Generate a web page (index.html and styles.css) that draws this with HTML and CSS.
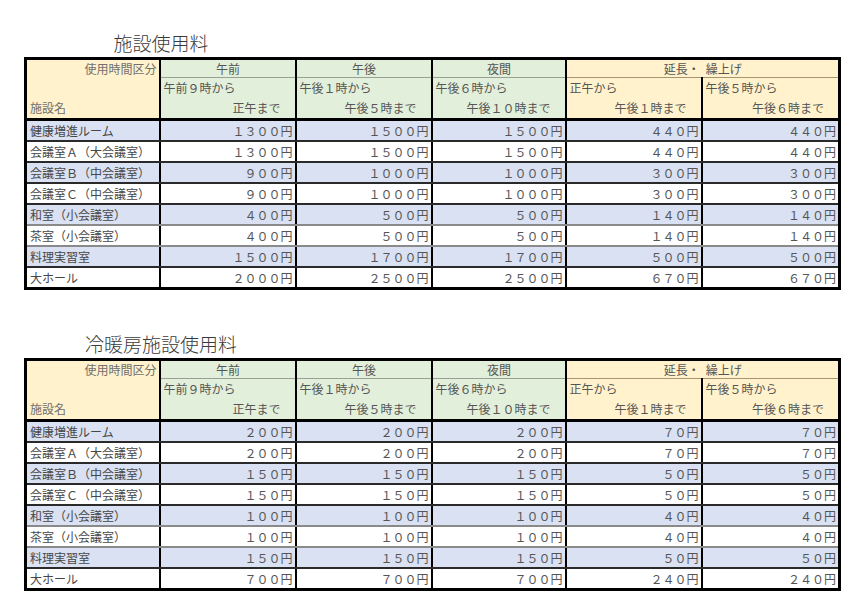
FILE: index.html
```html
<!DOCTYPE html>
<html lang="ja">
<head>
<meta charset="utf-8">
<title>施設使用料</title>
<link rel="stylesheet" href="styles.css">
</head>
<body>
<div class="page">
  <h2 class="title">施設使用料</h2>
  <table class="fee">
    <colgroup><col class="c1"><col class="c2"><col class="c3"><col class="c4"><col class="c5"><col class="c6"></colgroup>
    <tr class="h1">
      <td class="corner r">使用時間区分</td>
      <td class="g ctr">午前</td><td class="g ctr">午後</td><td class="g ctr">夜間</td>
      <td class="y ctr" colspan="2">延長・&ensp;繰上げ</td>
    </tr>
    <tr class="h2">
      <td class="corner"></td>
      <td class="g">午前９時から</td><td class="g">午後１時から</td><td class="g">午後６時から</td>
      <td class="y">正午から</td><td class="y">午後５時から</td>
    </tr>
    <tr class="h3">
      <td class="corner">施設名</td>
      <td class="g r">正午まで</td><td class="g r">午後５時まで</td><td class="g r">午後１０時まで</td>
      <td class="y r">午後１時まで</td><td class="y r">午後６時まで</td>
    </tr>
    <tr class="row b"><td>健康増進ルーム</td><td>１３００円</td><td>１５００円</td><td>１５００円</td><td>４４０円</td><td>４４０円</td></tr>
    <tr class="row"><td>会議室Ａ（大会議室）</td><td>１３００円</td><td>１５００円</td><td>１５００円</td><td>４４０円</td><td>４４０円</td></tr>
    <tr class="row b"><td>会議室Ｂ（中会議室）</td><td>９００円</td><td>１０００円</td><td>１０００円</td><td>３００円</td><td>３００円</td></tr>
    <tr class="row"><td>会議室Ｃ（中会議室）</td><td>９００円</td><td>１０００円</td><td>１０００円</td><td>３００円</td><td>３００円</td></tr>
    <tr class="row b soft"><td>和室（小会議室）</td><td>４００円</td><td>５００円</td><td>５００円</td><td>１４０円</td><td>１４０円</td></tr>
    <tr class="row soft"><td>茶室（小会議室）</td><td>４００円</td><td>５００円</td><td>５００円</td><td>１４０円</td><td>１４０円</td></tr>
    <tr class="row b"><td>料理実習室</td><td>１５００円</td><td>１７００円</td><td>１７００円</td><td>５００円</td><td>５００円</td></tr>
    <tr class="row"><td>大ホール</td><td>２０００円</td><td>２５００円</td><td>２５００円</td><td>６７０円</td><td>６７０円</td></tr>
  </table>

  <h2 class="title title-2">冷暖房施設使用料</h2>
  <table class="fee">
    <colgroup><col class="c1"><col class="c2"><col class="c3"><col class="c4"><col class="c5"><col class="c6"></colgroup>
    <tr class="h1">
      <td class="corner r">使用時間区分</td>
      <td class="g ctr">午前</td><td class="g ctr">午後</td><td class="g ctr">夜間</td>
      <td class="y ctr" colspan="2">延長・&ensp;繰上げ</td>
    </tr>
    <tr class="h2">
      <td class="corner"></td>
      <td class="g">午前９時から</td><td class="g">午後１時から</td><td class="g">午後６時から</td>
      <td class="y">正午から</td><td class="y">午後５時から</td>
    </tr>
    <tr class="h3">
      <td class="corner">施設名</td>
      <td class="g r">正午まで</td><td class="g r">午後５時まで</td><td class="g r">午後１０時まで</td>
      <td class="y r">午後１時まで</td><td class="y r">午後６時まで</td>
    </tr>
    <tr class="row b"><td>健康増進ルーム</td><td>２００円</td><td>２００円</td><td>２００円</td><td>７０円</td><td>７０円</td></tr>
    <tr class="row"><td>会議室Ａ（大会議室）</td><td>２００円</td><td>２００円</td><td>２００円</td><td>７０円</td><td>７０円</td></tr>
    <tr class="row b"><td>会議室Ｂ（中会議室）</td><td>１５０円</td><td>１５０円</td><td>１５０円</td><td>５０円</td><td>５０円</td></tr>
    <tr class="row"><td>会議室Ｃ（中会議室）</td><td>１５０円</td><td>１５０円</td><td>１５０円</td><td>５０円</td><td>５０円</td></tr>
    <tr class="row b soft"><td>和室（小会議室）</td><td>１００円</td><td>１００円</td><td>１００円</td><td>４０円</td><td>４０円</td></tr>
    <tr class="row soft"><td>茶室（小会議室）</td><td>１００円</td><td>１００円</td><td>１００円</td><td>４０円</td><td>４０円</td></tr>
    <tr class="row b"><td>料理実習室</td><td>１５０円</td><td>１５０円</td><td>１５０円</td><td>５０円</td><td>５０円</td></tr>
    <tr class="row"><td>大ホール</td><td>７００円</td><td>７００円</td><td>７００円</td><td>２４０円</td><td>２４０円</td></tr>
  </table>
</div>
</body>
</html>
```
FILE: styles.css
```css
html, body {
  margin: 0;
  background: #ffffff;
}
body {
  font-family: "Noto Sans CJK JP", "Noto Sans", sans-serif;
  color: #505050;
}
.page {
  padding-left: 24px;
}
.title {
  width: 274px;
  margin: 31px 0 2px 0;
  text-align: center;
  font-size: 19px;
  font-weight: 300;
  line-height: 24px;
  color: #3a3a3a;
}
.title-2 {
  margin-top: 42px;
}
.fee {
  border-collapse: collapse;
  table-layout: fixed;
  width: 814px;
  border: 3px solid #000000;
  font-size: 12px;
}
.c1 { width: 134px; }
.c2 { width: 136px; }
.c3 { width: 136px; }
.c4 { width: 134px; }
.c5 { width: 136px; }
.c6 { width: 138px; }
.fee td {
  padding: 0 2px 0 3px;
  white-space: nowrap;
  overflow: hidden;
  line-height: 16px;
  border-left: 2px solid #000000;
  border-right: 2px solid #000000;
}
.h1 td { height: 17px; }
.h2 td { height: 20px; }
.h3 td { height: 20px; }
.row td { height: 19px; }
.corner {
  background: #fff2cc;
  color: #707070;
}
.g { background: #e2efda; color: #555555; }
.y { background: #fff2cc; color: #555555; }
.ctr { text-align: center; }
.r { text-align: right; }
.h3 .g, .h3 .y { padding-right: 14px; }
.h1 .g { border-bottom: 1px solid #9aa096; }
.h1 .y { border-bottom: 1px solid #a99470; }
.h3 td { border-bottom: 3px solid #000000; }
.row td {
  text-align: right;
  border-bottom: 2px solid #2a2a2a;
  color: #555555;
}
.row td:first-child {
  text-align: left;
  color: #474747;
}
.row.soft td { border-bottom-color: #8a8a8a; }
.row.b td { background: #d9e1f2; }
```
